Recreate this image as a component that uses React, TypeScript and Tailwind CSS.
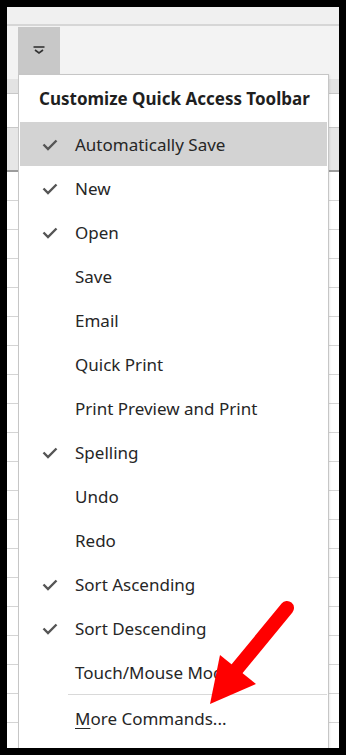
import React from 'react';

// Quick access toolbar dropdown, Excel style
const items: { label: string; checked: boolean; active?: boolean }[] = [
  { label: 'Automatically Save', checked: true, active: true },
  { label: 'New', checked: true },
  { label: 'Open', checked: true },
  { label: 'Save', checked: false },
  { label: 'Email', checked: false },
  { label: 'Quick Print', checked: false },
  { label: 'Print Preview and Print', checked: false },
  { label: 'Spelling', checked: true },
  { label: 'Undo', checked: false },
  { label: 'Redo', checked: false },
  { label: 'Sort Ascending', checked: true },
  { label: 'Sort Descending', checked: true },
  { label: 'Touch/Mouse Mode', checked: false },
];

const CheckMark = () => (
  <svg width="16" height="12" viewBox="0 0 16 12" fill="none">
    <path d="M1.5 5.5 L6 10 L14.5 1.5" stroke="#555" strokeWidth="2.4" strokeLinejoin="miter" />
  </svg>
);

const App: React.FC = () => {
  const gridRows = Array.from({ length: 20 });

  return (
    <div className="w-[346px] h-[755px] bg-black p-[7px] overflow-hidden">
      <div className="relative h-full w-full bg-white overflow-hidden font-['Noto_Sans',sans-serif]">
        {/* Ribbon strip + toolbar */}
        <div className="h-[17px] bg-[#f0f0f0]" />
        <div className="h-[2px] bg-[#d6d6d6]" />
        <div className="h-[53px] bg-[#f3f3f3] pl-[11px] pt-[1px]">
          <div className="w-[42px] h-[52px] bg-[#c8c8c8] flex justify-center pt-[19px]">
            <svg width="12" height="8" viewBox="0 0 12 8" fill="none">
              <path d="M0.5 1 H11.5" stroke="#333" strokeWidth="1.6" />
              <path d="M2 4 L6 7 L10 4" stroke="#333" strokeWidth="1.6" />
            </svg>
          </div>
        </div>

        {/* Spreadsheet behind the menu */}
        <div className="h-[15px] bg-[#e3e3e3] border-b border-[#c8c8c8]" />
        <div className="h-[34px] bg-white border-b border-[#c8c8c8]" />
        <div className="h-[44px] bg-[#e6e6e6] border-b-2 border-[#9c9c9c]" />
        {gridRows.map((_, i) => (
          <div key={i} className="h-[29px] border-b border-[#d4d4d4]" />
        ))}

        {/* Dropdown menu */}
        <div className="absolute left-[11px] top-[67px] w-[311px] h-[700px] bg-white border border-[#c6c6c6] shadow-[1px_1px_2px_rgba(0,0,0,0.08)]">
          <div className="h-[47px] flex items-center pl-[20px] text-[17px] font-bold text-[#1f1f1f] whitespace-nowrap">
            Customize Quick Access Toolbar
          </div>
          <div className="px-[1px]">
            {items.map(item => (
              <div
                key={item.label}
                className={`h-[44px] flex items-center pt-[2px] text-[17px] text-[#262626] ${item.active ? 'bg-[#d3d3d3]' : ''}`}
              >
                <div className="w-[55px] pl-[22px] flex items-center">
                  {item.checked && <CheckMark />}
                </div>
                <span className="whitespace-nowrap">{item.label}</span>
              </div>
            ))}
            <div className="ml-[48px] h-px bg-[#d9d9d9]" />
            <div className="h-[48px] flex items-center pl-[55px] text-[17px] text-[#262626]">
              <span><span className="underline underline-offset-[3px]">M</span>ore Commands...</span>
            </div>
          </div>
        </div>

        {/* Red annotation arrow */}
        <svg className="absolute left-[-7px] top-[-7px] pointer-events-none" width="346" height="755" viewBox="0 0 346 755">
          <line x1="287" y1="608" x2="236" y2="670" stroke="#ff0000" strokeWidth="14" strokeLinecap="round" />
          <polygon points="220,655 256,684 210,704" fill="#ff0000" />
        </svg>
      </div>
    </div>
  );
};

export default App;
